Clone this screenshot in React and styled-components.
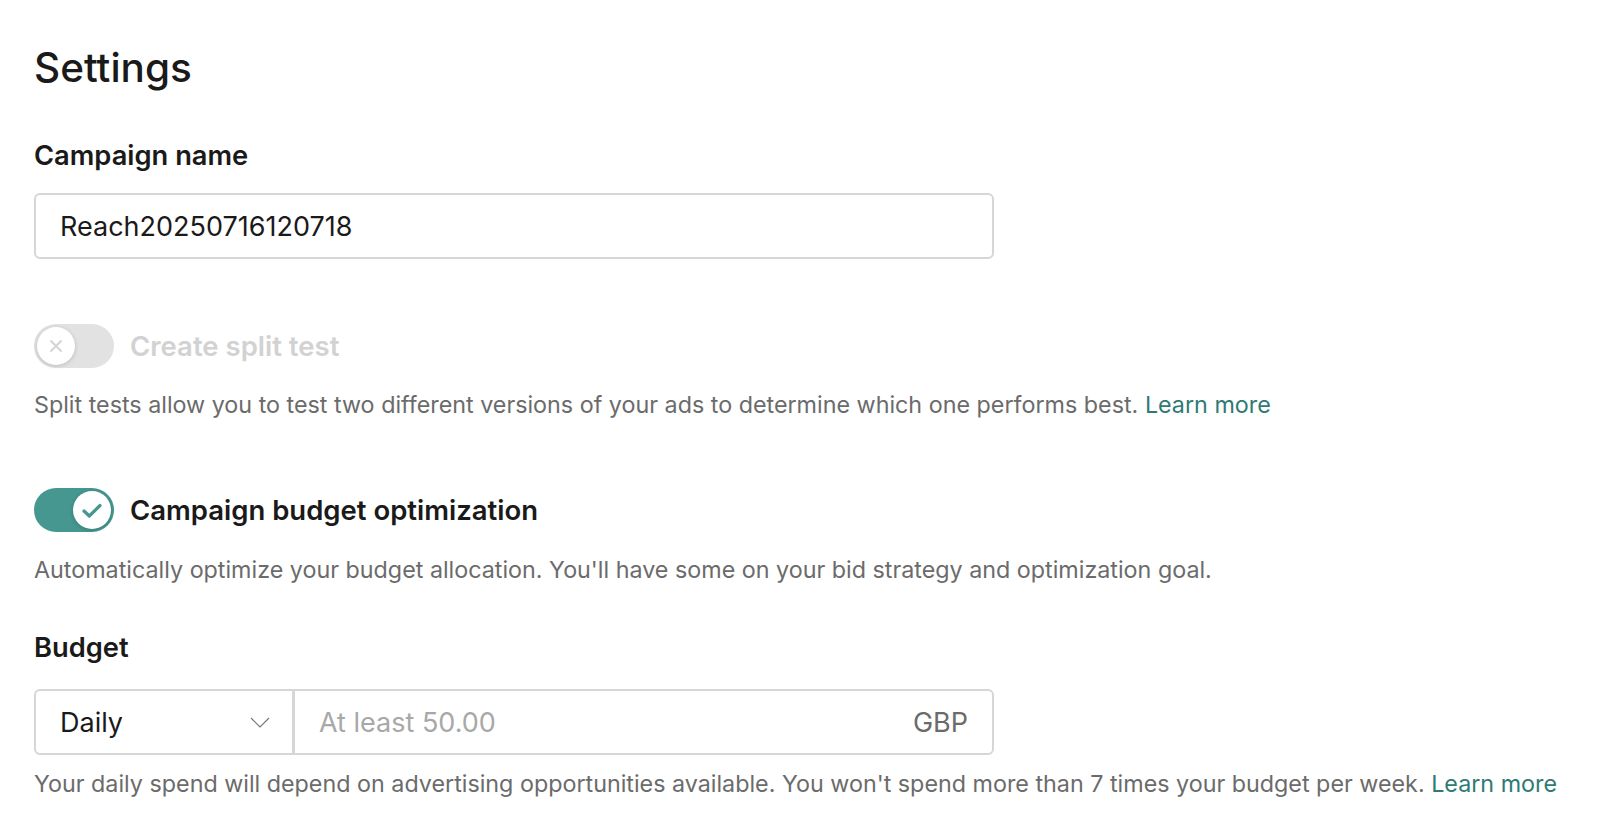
import React, { useState } from 'react';
import styled, { createGlobalStyle } from 'styled-components';

const GlobalStyle = createGlobalStyle`
  body {
    margin: 0;
    background: #ffffff;
    font-family: Inter, "Noto Sans", "Liberation Sans", sans-serif;
    color: #1a1a1a;
  }
`;

const Page = styled.div`
  padding: 46px 34px 0;
  box-sizing: border-box;
`;

const Heading = styled.h1`
  margin: 0;
  font-size: 40.5px;
  line-height: 44px;
  font-weight: 500;
  color: #1a1a1a;
`;

const Label = styled.div`
  margin-top: ${props => props.gap || 48}px;
  font-size: 27.3px;
  line-height: 32px;
  font-weight: 600;
  color: #1a1a1a;
`;

const TextInput = styled.input`
  display: block;
  margin-top: 21px;
  width: 960px;
  height: 66px;
  box-sizing: border-box;
  border: 2px solid #d6d6d6;
  border-radius: 6px;
  padding: 0 24px;
  font-family: inherit;
  font-size: 27px;
  color: #1a1a1a;
  outline: none;
`;

const ToggleRow = styled.div`
  display: flex;
  align-items: center;
  gap: 16px;
  margin-top: ${props => props.gap}px;
  height: 44px;
`;

const Track = styled.button`
  position: relative;
  width: 80px;
  height: 44px;
  border: none;
  padding: 0;
  border-radius: 22px;
  background: ${props => (props.on ? '#45978f' : '#e2e2e2')};
  cursor: ${props => (props.disabled ? 'default' : 'pointer')};
  flex-shrink: 0;
`;

const Knob = styled.span`
  position: absolute;
  top: 3px;
  left: ${props => (props.on ? '39px' : '3px')};
  width: 38px;
  height: 38px;
  border-radius: 50%;
  background: #ffffff;
  box-shadow: 0 1px 4px rgba(0, 0, 0, 0.18);
  display: flex;
  align-items: center;
  justify-content: center;
`;

const ToggleLabel = styled.span`
  font-size: 27.5px;
  font-weight: 600;
  color: ${props => (props.muted ? '#d2d2d2' : '#1a1a1a')};
`;

const Helper = styled.p`
  margin: ${props => props.gap}px 0 0;
  font-size: 23.3px;
  line-height: 30px;
  color: #6b6b6b;
  white-space: nowrap;
`;

const LearnMore = styled.a`
  color: #2f7b74;
  text-decoration: none;
  cursor: pointer;
`;

const BudgetGroup = styled.div`
  display: flex;
  margin-top: 25px;
  width: 960px;
  height: 66px;
  box-sizing: border-box;
  border: 2px solid #d6d6d6;
  border-radius: 6px;
`;

const Select = styled.div`
  width: 259px;
  flex-shrink: 0;
  display: flex;
  align-items: center;
  justify-content: space-between;
  padding: 0 22px 0 24px;
  box-sizing: border-box;
  border-right: 3px solid #d6d6d6;
  font-size: 27px;
  color: #1a1a1a;
`;

const AmountField = styled.div`
  flex: 1;
  display: flex;
  align-items: center;
  justify-content: space-between;
  padding: 0 24px 0 24px;
  font-size: 27px;
`;

const Placeholder = styled.span`
  color: #a8a8a8;
`;

const Currency = styled.span`
  color: #6b6b6b;
`;

const Toggle = ({ on, disabled, onChange }) => (
  <Track on={on ? 1 : 0} disabled={disabled} onClick={() => !disabled && onChange(!on)}>
    <Knob on={on ? 1 : 0}>
      {on ? (
        <svg width="20" height="15" viewBox="0 0 20 15" fill="none">
          <path d="M2 8 L7.3 13 L18 2.5" stroke="#45978f" strokeWidth="3.2" strokeLinecap="round" strokeLinejoin="round" />
        </svg>
      ) : (
        <svg width="14" height="14" viewBox="0 0 14 14" fill="none">
          <path d="M2 2 L12 12 M12 2 L2 12" stroke="#d4d4d4" strokeWidth="2" strokeLinecap="round" />
        </svg>
      )}
    </Knob>
  </Track>
);

const Chevron = () => (
  <svg width="20" height="11" viewBox="0 0 20 11" fill="none">
    <path d="M1 1 L10 10 L19 1" stroke="#777777" strokeWidth="1.2" />
  </svg>
);

export default function App() {
  const [name, setName] = useState('Reach20250716120718');
  const [cbo, setCbo] = useState(true);

  return (
    <Page>
      <GlobalStyle />
      <Heading>Settings</Heading>

      <Label gap={50}>Campaign name</Label>
      <TextInput value={name} onChange={e => setName(e.target.value)} />

      <ToggleRow gap={65}>
        <Toggle on={false} disabled />
        <ToggleLabel muted>Create split test</ToggleLabel>
      </ToggleRow>
      <Helper gap={22}>
        Split tests allow you to test two different versions of your ads to determine which one performs best.{' '}
        <LearnMore>Learn more</LearnMore>
      </Helper>

      <ToggleRow gap={68}>
        <Toggle on={cbo} onChange={setCbo} />
        <ToggleLabel>Campaign budget optimization</ToggleLabel>
      </ToggleRow>
      <Helper gap={23}>
        Automatically optimize your budget allocation. You'll have some on your bid strategy and optimization goal.
      </Helper>

      <Label gap={47}>Budget</Label>
      <BudgetGroup>
        <Select>
          Daily
          <Chevron />
        </Select>
        <AmountField>
          <Placeholder>At least 50.00</Placeholder>
          <Currency>GBP</Currency>
        </AmountField>
      </BudgetGroup>
      <Helper gap={14}>
        Your daily spend will depend on advertising opportunities available. You won't spend more than 7 times your budget per week.{' '}
        <LearnMore>Learn more</LearnMore>
      </Helper>
    </Page>
  );
}
